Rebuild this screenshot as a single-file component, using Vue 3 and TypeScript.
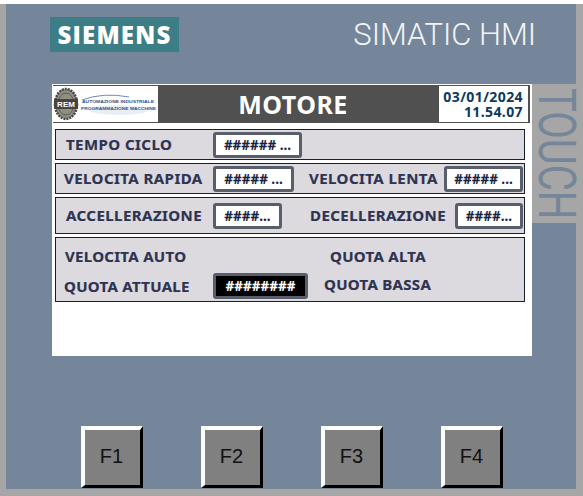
<template>
  <div class="device">
    <div class="face">
      <div class="brand">
        <div class="siemens">SIEMENS</div>
        <div class="simatic">SIMATIC HMI</div>
      </div>

      <div class="middle">
        <div class="screen">
          <header class="top">
            <div class="logo">
              <svg width="105" height="36" viewBox="0 0 105 36">
                <ellipse cx="13" cy="18" rx="11" ry="15" fill="#8f8f86" stroke="#46463f" stroke-width="2.5" stroke-dasharray="2 1" />
                <ellipse cx="13" cy="18" rx="8" ry="11" fill="none" stroke="#5c5c54" stroke-width="1" />
                <rect x="1" y="13" width="24" height="10" fill="#45453f" />
                <text x="13" y="21" class="rem">REM</text>
                <ellipse cx="66" cy="24" rx="30" ry="5" fill="#e9eef5" />
                <path d="M29 14 Q50 6 76 11" fill="none" stroke="#6f8bb4" stroke-width="1" />
                <text x="29" y="16.5" class="tiny" textLength="72" lengthAdjust="spacingAndGlyphs">AUTOMAZIONE INDUSTRIALE</text>
                <text x="28" y="23.5" class="tiny" textLength="75" lengthAdjust="spacingAndGlyphs">PROGRAMMAZIONE MACCHINE</text>
              </svg>
            </div>
            <h1 class="title">MOTORE</h1>
            <div class="clock">
              <span>03/01/2024</span>
              <span>11.54.07</span>
            </div>
          </header>

          <section class="row row-one">
            <span class="label tempo">TEMPO CICLO</span>
            <span class="field w-89">###### ...</span>
          </section>

          <section class="row row-two">
            <span class="label rapida">VELOCITA RAPIDA</span>
            <span class="field w-81">##### ...</span>
            <span class="label lenta">VELOCITA LENTA</span>
            <span class="field w-79">##### ...</span>
          </section>

          <section class="row row-three">
            <span class="label accel">ACCELLERAZIONE</span>
            <span class="field w-69">####...</span>
            <span class="label decel">DECELLERAZIONE</span>
            <span class="field w-68">####...</span>
          </section>

          <section class="row row-four">
            <div class="line">
              <span class="label auto">VELOCITA AUTO</span>
              <span class="label alta">QUOTA ALTA</span>
            </div>
            <div class="line">
              <span class="label attuale">QUOTA ATTUALE</span>
              <span class="field dark">########</span>
              <span class="label bassa">QUOTA BASSA</span>
            </div>
          </section>
        </div>

        <div class="touch"><span>TOUCH</span></div>
      </div>

      <div class="keys">
        <button v-for="key in keys" :key="key" class="key">{{ key }}</button>
      </div>
    </div>
  </div>
</template>

<script setup lang="ts">
const keys: string[] = ['F1', 'F2', 'F3', 'F4']
</script>

<style>
body {
  margin: 0;
  background: #a6a6a6;
}
</style>

<style scoped>
.device {
  width: 583px;
  height: 496px;
  box-sizing: border-box;
  padding: 4px 7px 7px 6px;
  background: linear-gradient(#fff 4px, #a6a6a6 4px);
  overflow: hidden;
}

.face {
  height: 485px;
  background: #76869a;
  display: flex;
  flex-direction: column;
}

.brand {
  display: flex;
  justify-content: space-between;
  align-items: flex-start;
  height: 35px;
  margin-top: 13px;
  padding: 0 40px 0 44px;
}

.siemens {
  width: 129px;
  height: 35px;
  background: #3d7d85;
  color: #fff;
  font: 800 24px/35px "Open Sans", sans-serif;
  letter-spacing: 1.2px;
  text-align: center;
}

.simatic {
  color: #f2f4f6;
  font: 300 31px/35px Roboto, sans-serif;
}

.middle {
  display: flex;
  align-items: flex-start;
  margin: 32px 0 0 46px;
}

.screen {
  width: 480px;
  height: 272px;
  box-sizing: border-box;
  padding: 1px 2px 0 1px;
  background: #fff;
  font-family: "Noto Sans", sans-serif;
}

.top {
  display: flex;
  height: 38px;
  box-sizing: border-box;
  padding: 1px 2px 1px 0;
  background: #505050;
}

.logo {
  width: 105px;
  background: #fff;
  line-height: 0;
}

.rem {
  fill: #fff;
  font: 700 8px "Liberation Sans", sans-serif;
  text-anchor: middle;
}

.tiny {
  fill: #33527f;
  font: 700 4.4px "Liberation Sans", sans-serif;
}

.title {
  flex: 1;
  margin: 0;
  padding-right: 11px;
  color: #fff;
  font-size: 25px;
  font-weight: 700;
  line-height: 36px;
  letter-spacing: 0.5px;
  text-align: center;
}

.clock {
  width: 89px;
  box-sizing: border-box;
  padding: 3px 5px 0 0;
  background: #fff;
  color: #0c3a5c;
  font-size: 14px;
  font-weight: 700;
  line-height: 15px;
  text-align: right;
  letter-spacing: 0.4px;
}

.clock span {
  display: block;
}

.row {
  display: flex;
  align-items: center;
  box-sizing: border-box;
  width: 470px;
  margin-left: 2px;
  background: #dcdadf;
  border: 1px solid #1a1c3a;
}

.row-one {
  height: 31px;
  margin-top: 6px;
}

.row-two {
  height: 31px;
  margin-top: 3px;
}

.row-three {
  height: 37px;
  margin-top: 3px;
}

.row-four {
  height: 65px;
  margin-top: 3px;
  flex-direction: column;
  align-items: stretch;
}

.line {
  display: flex;
  align-items: center;
}

.line:first-child {
  height: 35px;
}

.line:last-child {
  height: 25px;
}

.label {
  color: #2d3350;
  font-size: 15px;
  font-weight: 700;
  letter-spacing: 0.45px;
  white-space: nowrap;
  line-height: 18px;
  -webkit-text-stroke: 0.2px #2d3350;
}

.row-one .label,
.row-two .label,
.row-three .label {
  margin-bottom: 2px;
}

.row-four .label {
  letter-spacing: 0.3px;
}

.field {
  box-sizing: border-box;
  height: 26px;
  border: 3px solid #585e6c;
  border-radius: 3px;
  background: #fff;
  color: #1a2340;
  font: 700 13.5px/20px "Noto Sans", sans-serif;
  text-align: center;
  white-space: nowrap;
  overflow: hidden;
}

.field.dark {
  width: 95px;
  background: #000;
  color: #fff;
}

.w-89 { width: 89px; }
.w-81 { width: 81px; }
.w-79 { width: 79px; }
.w-69 { width: 69px; }
.w-68 { width: 68px; }

/* labels start at their own x inside each row, the panel was laid out by hand */
.tempo { width: 147px; margin-left: 10px; }
.rapida { width: 149px; margin-left: 8px; }
.lenta { width: 135px; margin-left: 15px; }
.accel { width: 147px; margin-left: 10px; }
.decel { width: 145px; margin-left: 28px; }
.auto { width: 265px; margin-left: 9px; }
.attuale { width: 149px; margin-left: 8px; }
.bassa { margin-left: 16px; margin-bottom: 3px; }

.row-two .field,
.row-three .field {
  flex: none;
}

.touch {
  width: 44px;
  height: 139px;
  background: #a6a6a6;
}

.touch span {
  display: block;
  height: 135px;
  color: #76869a;
  font: 400 40px/34px Roboto, sans-serif;
  writing-mode: vertical-rl;
  white-space: nowrap;
  transform-origin: top left;
  transform: scaleX(1.3);
  margin: 4px 0 0 2px;
}

.keys {
  display: flex;
  gap: 58px;
  margin: 70px 0 0 75px;
}

.key {
  width: 62px;
  height: 62px;
  padding: 0 2px 2px 0;
  box-sizing: border-box;
  background: #808080;
  border-style: solid;
  border-width: 4px 3px 3px 4px;
  border-color: #fff #000 #000 #fff;
  color: #111;
  font: 400 20px "Liberation Sans", sans-serif;
}
</style>
